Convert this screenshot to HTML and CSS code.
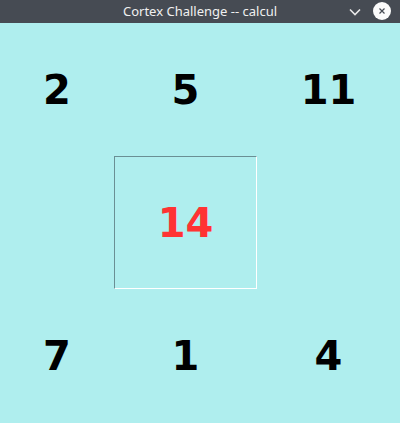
FILE: index.html
```html
<!DOCTYPE html>
<html>
<head>
<meta charset="utf-8">
<link rel="stylesheet" href="styles.css">
</head>
<body>
<div class="window">
  <div class="titlebar">
    <span class="title">Cortex Challenge -- calcul</span>
    <span class="btn-min">
      <svg width="14" height="10" viewBox="0 0 14 10"><path d="M2 2.5 L7 7.5 L12 2.5" fill="none" stroke="#e8e8e8" stroke-width="1.6"/></svg>
    </span>
    <span class="btn-close">
      <svg width="18" height="18" viewBox="0 0 18 18"><circle cx="9" cy="9" r="9" fill="#fbfbfb"/><path d="M6.5 6.5 L11.5 11.5 M11.5 6.5 L6.5 11.5" stroke="#464b53" stroke-width="1.2"/></svg>
    </span>
  </div>
  <div class="board">
    <div class="cell">2</div>
    <div class="cell">5</div>
    <div class="cell">11</div>
    <div class="cell"></div>
    <div class="cell target">14</div>
    <div class="cell"></div>
    <div class="cell">7</div>
    <div class="cell">1</div>
    <div class="cell">4</div>
  </div>
</div>
</body>
</html>
```
FILE: styles.css
```css
html, body {
  margin: 0;
  padding: 0;
}
body {
  width: 400px;
  height: 423px;
  overflow: hidden;
  background: #afeeee;
}
.window {
  display: flex;
  flex-direction: column;
  width: 400px;
  height: 423px;
}
.titlebar {
  height: 23px;
  background: #464b53;
  position: relative;
  display: flex;
  align-items: center;
  justify-content: center;
  flex-shrink: 0;
}
.title {
  font-family: "Noto Sans", sans-serif;
  font-size: 13px;
  color: #f0f0f0;
  line-height: 23px;
}
.btn-min {
  position: absolute;
  left: 348px;
  top: 7px;
  display: flex;
}
.btn-close {
  position: absolute;
  left: 373px;
  top: 2px;
  display: flex;
}
.board {
  flex: 1;
  display: grid;
  grid-template-columns: 114px 143px 143px;
  grid-template-rows: 133px 133px 134px;
  background: #afeeee;
}
.cell {
  display: flex;
  align-items: center;
  justify-content: center;
  font-family: "DejaVu Sans", sans-serif;
  font-weight: bold;
  font-size: 40px;
  color: #000;
}
.target {
  color: #ff3333;
  box-sizing: border-box;
  border-top: 1px solid #6a8f94;
  border-left: 1px solid #6a8f94;
  border-bottom: 1px solid #ffffff;
  border-right: 1px solid #ffffff;
}
```
